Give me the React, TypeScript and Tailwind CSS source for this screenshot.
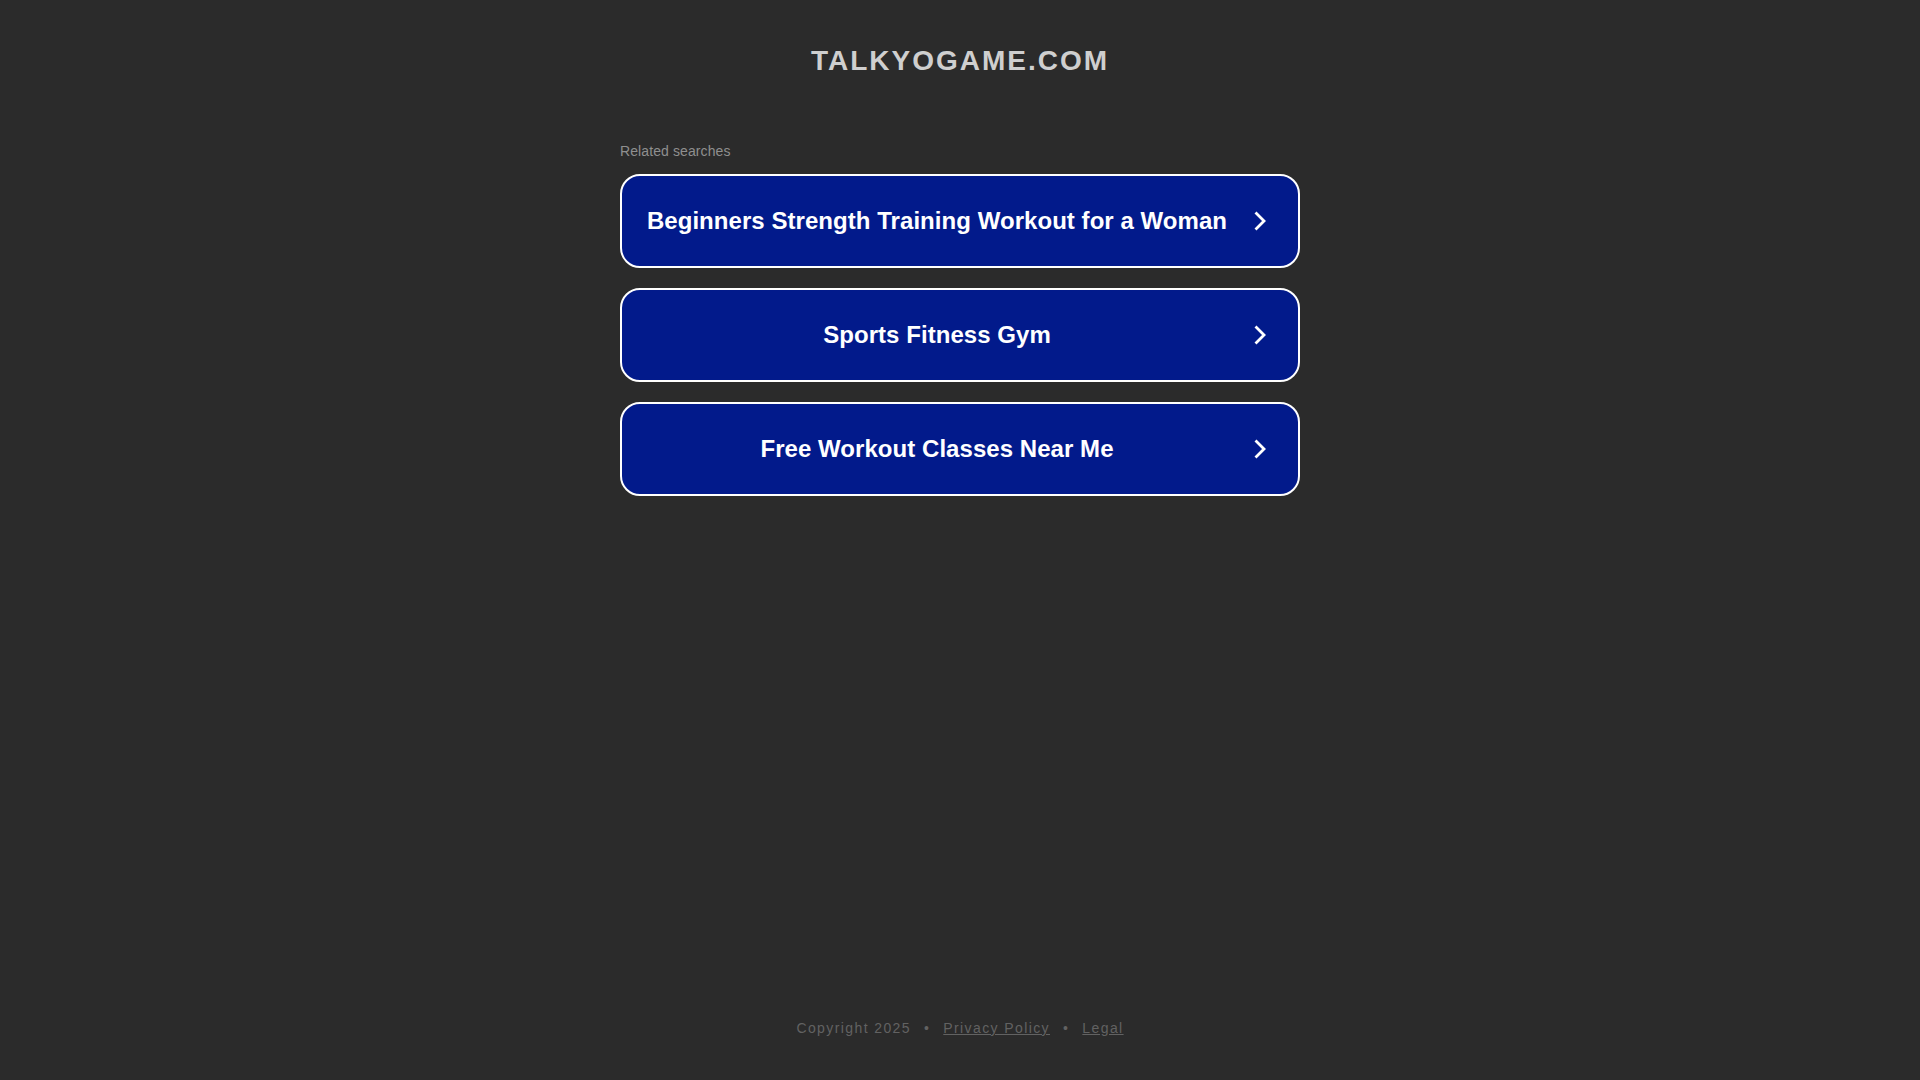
import React from "react";

const searches = [
  "Beginners Strength Training Workout for a Woman",
  "Sports Fitness Gym",
  "Free Workout Classes Near Me",
];

function Chevron() {
  return (
    <svg width="24" height="24" viewBox="0 0 24 24" className="ml-[16px] shrink-0" fill="none">
      <polyline
        points="7.5,3.5 16,12 7.5,20.5"
        stroke="#ffffff"
        strokeWidth="2.8"
        strokeLinecap="butt"
        strokeLinejoin="miter"
      />
    </svg>
  );
}

export default function App() {
  return (
    <div
      className="h-screen w-full bg-[#2b2b2b] flex flex-col items-center"
      style={{ fontFamily: '"Liberation Sans", Arial, sans-serif' }}
    >
      <h1 className="mt-[45px] h-[32px] leading-[32px] text-[28px] font-bold tracking-[2px] text-[#cfcfcf]">
        TALKYOGAME.COM
      </h1>

      <div className="w-[680px] mt-[64px] flex flex-col">
        <div className="h-[20px] leading-[20px] text-[14px] tracking-[0.1px] text-[#8f8f8f]">Related searches</div>
        <div className="mt-[13px] flex flex-col gap-[20px]">
          {searches.map((s) => (
            <a
              key={s}
              href="#"
              className="h-[94px] rounded-[20px] border-2 border-white bg-[#021a8b] flex items-center pl-[20px] pr-[26px] text-white no-underline"
            >
              <span className="flex-1 text-center text-[24px] font-bold leading-[28px] tracking-[0.05px]">{s}</span>
              <Chevron />
            </a>
          ))}
        </div>
      </div>

      <footer className="mt-auto mb-[42px] h-[20px] leading-[20px] text-[14px] tracking-[1.4px] text-[#626262] flex items-center">
        <span>Copyright 2025</span>
        <span className="mx-[13px]">•</span>
        <a href="#" className="underline">Privacy Policy</a>
        <span className="mx-[13px]">•</span>
        <a href="#" className="underline">Legal</a>
      </footer>
    </div>
  );
}
